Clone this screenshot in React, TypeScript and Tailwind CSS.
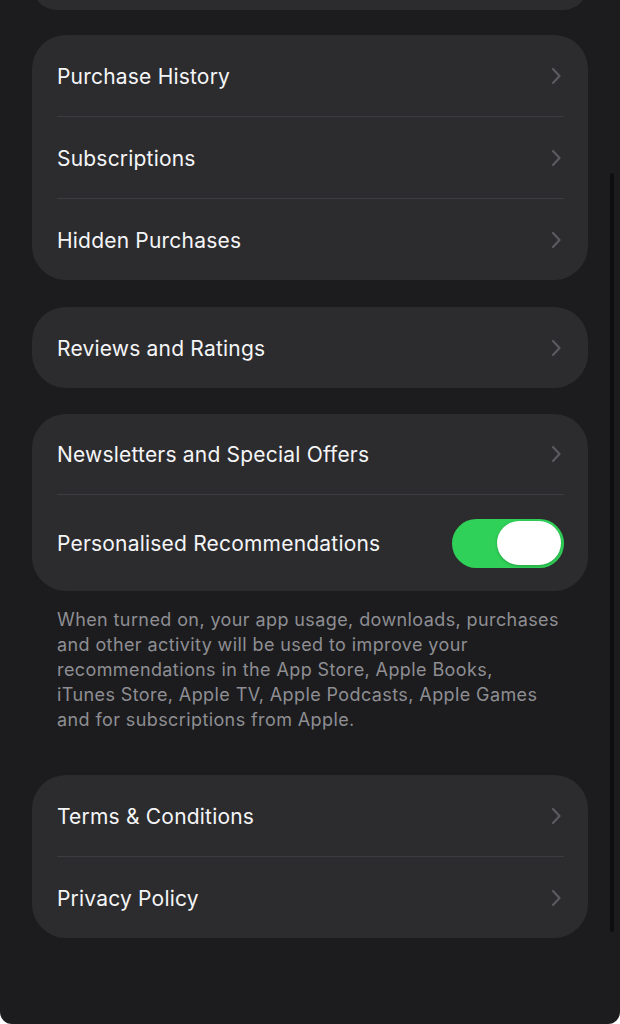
import React from 'react';

const font = { fontFamily: 'Inter, "Noto Sans", sans-serif' };

const Chevron: React.FC = () => (
  <svg width="12" height="18" viewBox="0 0 12 18" fill="none" className="shrink-0">
    <path d="M3 2l6.5 7L3 16" stroke="#5b5b5f" strokeWidth="2.2" strokeLinecap="round" strokeLinejoin="round" />
  </svg>
);

const Divider: React.FC = () => <div className="ml-[25px] mr-[24px] h-px bg-[#3d3d41]" />;

const Row: React.FC<{ label: string; h?: string; children?: React.ReactNode }> = ({ label, h = 'h-[81px]', children }) => (
  <div className={`${h} flex items-center justify-between pl-[25px] pr-[26px]`}>
    <span className="text-[21px] text-[#f5f5f7] tracking-[0.2px] translate-y-px">{label}</span>
    {children ?? <Chevron />}
  </div>
);

const Toggle: React.FC = () => (
  <div className="w-[112px] h-[49px] rounded-full bg-[#30d158] flex items-center justify-end pr-[3px] -mr-[2px]">
    <div className="w-[64px] h-[44px] rounded-full bg-white shadow-[0_1px_3px_rgba(0,0,0,0.25)]" />
  </div>
);

export default function App() {
  return (
    <div className="w-[620px] h-[1024px] bg-white" style={font}>
      <div className="relative h-full bg-[#1c1c1e] rounded-b-[12px] overflow-hidden">
        <div className="px-[32px]">
          <div className="-mt-[40px] h-[50px] rounded-[34px] bg-[#2c2c2e]" />

          <div className="mt-[25px] rounded-[34px] bg-[#2c2c2e]">
            <Row label="Purchase History" />
            <Divider />
            <Row label="Subscriptions" />
            <Divider />
            <Row label="Hidden Purchases" />
          </div>

          <div className="mt-[27px] rounded-[34px] bg-[#2c2c2e]">
            <Row label="Reviews and Ratings" />
          </div>

          <div className="mt-[26px] rounded-[34px] bg-[#2c2c2e]">
            <Row label="Newsletters and Special Offers" h="h-[80px]" />
            <Divider />
            <Row label="Personalised Recommendations" h="h-[96px]">
              <Toggle />
            </Row>
          </div>

          <p className="pt-[16px] pl-[25px] pr-[20px] text-[18px] leading-[25px] tracking-[0.4px] text-[#8e8e93]">
            When turned on, your app usage, downloads, purchases and other activity will be used to improve your
            <br />
            recommendations in the App Store, Apple Books,
            <br />
            iTunes Store, Apple TV, Apple Podcasts, Apple Games
            <br />
            and for subscriptions from Apple.
          </p>

          <div className="mt-[43px] rounded-[34px] bg-[#2c2c2e]">
            <Row label="Terms & Conditions" />
            <Divider />
            <Row label="Privacy Policy" />
          </div>
        </div>

        <div className="absolute left-[610px] top-[173px] w-[4px] h-[759px] rounded-full bg-[#0e0e0f]" />
      </div>
    </div>
  );
}
